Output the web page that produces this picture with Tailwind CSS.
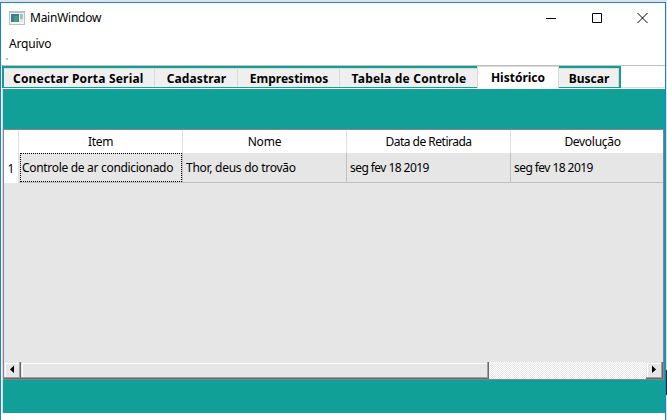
<!DOCTYPE html>
<html lang="pt"><head><meta charset="utf-8"><title>MainWindow</title>
<script src="https://cdn.jsdelivr.net/npm/@tailwindcss/browser@4"></script></head>
<body class="w-[667px] h-[420px] overflow-hidden bg-[#e1e1e1] pt-[2px] text-[12px] text-black font-['Noto_Sans','Open_Sans',sans-serif]">
<div class="relative w-[666px] h-[418px] bg-white border-t border-x border-[#1883d7] flex flex-col">
  <header class="h-[29px] shrink-0 flex items-center pl-2">
    <svg width="16" height="14" viewBox="0 0 16 14" shape-rendering="crispEdges"><rect width="16" height="14" fill="#b8c0c5"/><rect x="1" y="2" width="14" height="11" fill="#f4f6f6"/><rect x="2" y="3" width="8" height="8" fill="#3d7c98"/><path d="M2 3h3v8H2z" fill="#407a9b"/><path d="M5 5h4v6H5z" fill="#4a9a80"/><path d="M11 3h3v5h-3z" fill="#9bc4b4"/><path d="M11 8h3v3h-3z" fill="#dbe6e5"/></svg>
    <h1 class="ml-[5px] mt-px leading-4 whitespace-nowrap tracking-[-0.25px]"><span>MainWindow</span></h1>
    <div class="ml-auto mr-[17px] flex gap-[35px]">
      <svg width="11" height="11" fill="none" stroke="#000"><path d="M0 6.5h10"/></svg>
      <svg width="10" height="11" fill="none" stroke="#000"><path d="M.5 1.5h9v9h-9z"/></svg>
      <svg width="11" height="11" fill="none" stroke="#000"><path d="M.5 1l10 10M10.500 1l-10 10"/></svg>
    </div>
  </header>
  <nav class="h-[33px] shrink-0 pl-2 pt-[4px] leading-4 tracking-[-0.2px]"><span>Arquivo</span><div class="w-[2px] h-[2px] bg-[#c0c0c0] -ml-[3px] mt-[6px]"></div></nav>
  <div class="h-[23px] shrink-0 border-t border-[#c0c0c0] flex pl-px font-bold leading-4 whitespace-nowrap">
    <div class="w-[153px] border-y border-t-2 border-l-2 border-[#10a098] bg-[#efefef] pl-[9px] pt-[3px] shadow-[inset_-1px_1px_#d9d9d9] tracking-[0.19px]"><span>Conectar Porta Serial</span></div>
    <div class="w-[83px] border-b border-t-2 border-[#10a098] bg-[#efefef] text-center pt-[3px] shadow-[inset_-1px_1px_#d9d9d9] tracking-[0.1px]"><span>Cadastrar</span></div>
    <div class="w-[102px] border-b border-t-2 border-[#10a098] bg-[#efefef] text-center pt-[3px] shadow-[inset_-1px_1px_#d9d9d9]"><span>Emprestimos</span></div>
    <div class="w-[137px] border-b border-t-2 border-[#10a098] bg-[#efefef] text-center pt-[3px] pl-px shadow-[inset_0_1px_#d9d9d9] tracking-[0.2px]"><span>Tabela de Controle</span></div>
    <div class="w-[82px] border-x border-t border-[#d9d9d9] bg-white text-center pt-[3px]"><span>Histórico</span></div>
    <div class="w-[62px] border-b border-t-2 border-r-2 border-[#10a098] bg-[#efefef] text-center pt-[3px] shadow-[inset_-1px_1px_#d9d9d9]"><span>Buscar</span></div>
    <div class="grow border-b border-[#d9d9d9]"></div>
  </div>
  <main class="h-[325px] shrink-0 ml-px border-l border-t border-t-white border-[#d9d9d9] bg-[#10a098] pt-[40px]">
    <div class="w-[661px] h-[251px] border border-[#82878b] bg-[#e6e6e6] flex flex-col leading-4 whitespace-nowrap">
      <div class="h-[23px] shrink-0 bg-white flex text-center leading-[23px]">
        <div class="w-[15px] border-r border-[#e0e0e0]"></div>
        <div class="w-[164px] border-r border-[#e0e0e0] tracking-[-0.3px]"><span>Item</span></div>
        <div class="w-[164px] border-r border-[#e0e0e0] tracking-[-0.2px]"><span>Nome</span></div>
        <div class="w-[164px] border-r border-[#e0e0e0] tracking-[-0.5px]"><span>Data de Retirada</span></div>
        <div class="w-[152px] pl-[11px] tracking-[-0.3px]"><span>Devolução</span></div>
      </div>
      <div class="h-[30px] shrink-0 flex leading-[30px]">
        <div class="w-[15px] bg-white border-r border-[#e0e0e0] text-center leading-[31px]">1</div>
        <div class="w-[164px] border-r border-b border-[#c0c0c0] pl-px"><div class="h-[29px] w-[162px] border border-dotted border-black pl-px leading-[28px] tracking-[-0.31px]"><span>Controle de ar condicionado</span></div></div>
        <div class="w-[164px] border-r border-b border-[#c0c0c0] pl-[3px] tracking-[-0.27px]"><span>Thor, deus do trovão</span></div>
        <div class="w-[164px] border-r border-b border-[#c0c0c0] pl-[3px] tracking-[-0.56px]"><span>seg fev 18 2019</span></div>
        <div class="w-[152px] border-b border-[#c0c0c0] pl-[3px] tracking-[-0.56px]"><span>seg fev 18 2019</span></div>
      </div>
      <div class="grow"></div>
      <div class="h-[17px] shrink-0 flex bg-[repeating-conic-gradient(#e6e6e6_0_25%,#fff_0_50%)] bg-[length:2px_2px]">
        <div class="w-[17px] border-r border-b border-[#696969] bg-[#e6e6e6] shadow-[inset_-1px_-1px_#a0a0a0,inset_1px_1px_#e6e6e6,inset_2px_2px_#fff]"><svg width="16" height="16"><path d="M6 7.500L10 3.500V11z"/></svg></div>
        <div class="w-[468px] border-r border-b border-[#696969] bg-[#e6e6e6] shadow-[inset_-1px_-1px_#a0a0a0,inset_1px_1px_#e6e6e6,inset_2px_2px_#fff]"></div>
        <div class="grow"></div>
        <div class="w-[17px] border-r border-b border-[#696969] bg-[#e6e6e6] shadow-[inset_-1px_-1px_#a0a0a0,inset_1px_1px_#e6e6e6,inset_2px_2px_#fff]"><svg width="16" height="16"><path d="M10 7.500L6 3.500V11z"/></svg></div>
      </div>
    </div>
  </main>
  <div class="absolute left-[665px] top-[367px] w-px h-[25px] bg-[#202838]"></div>
</div>
</body></html>
